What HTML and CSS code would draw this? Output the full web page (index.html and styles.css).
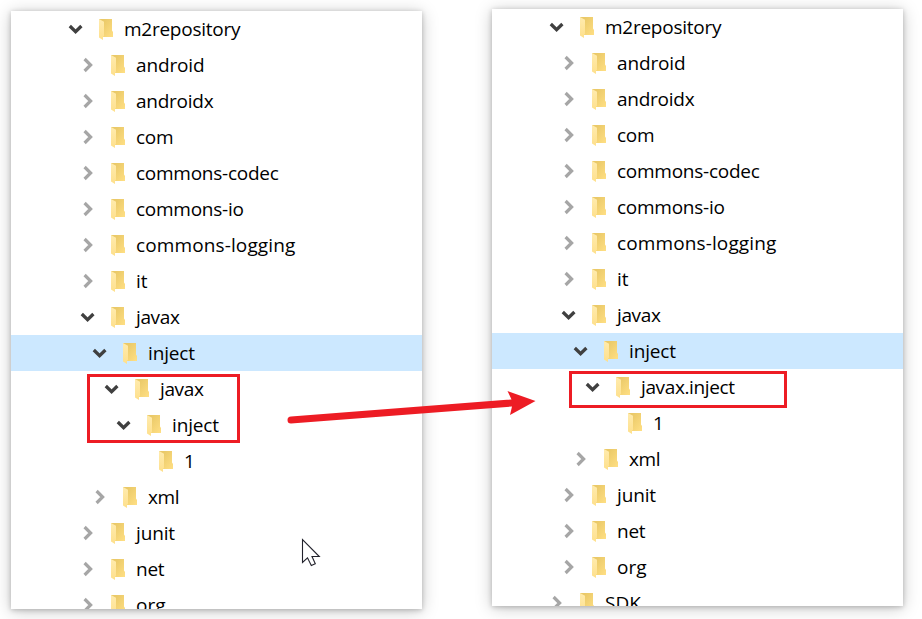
FILE: index.html
```html
<!DOCTYPE html>
<html lang="en">
<head>
<meta charset="utf-8">
<title>m2repository</title>
<link rel="stylesheet" href="styles.css">
</head>
<body>
<svg class="defs" aria-hidden="true">
  <defs>
    <linearGradient id="back" x1="0" y1="0" x2="1" y2="1"><stop offset="0.2" stop-color="#eac968"/><stop offset="1" stop-color="#ffdf84"/></linearGradient>
    <linearGradient id="flap" x1="0" y1="0" x2="0" y2="1"><stop offset="0" stop-color="#ffebae"/><stop offset="1" stop-color="#fee08c"/></linearGradient>
    <symbol id="folder" viewBox="0 0 14 21"><path fill="url(#back)" d="M0 0H13V11.600L14 13V18H0Z"/><path fill="url(#flap)" d="M0 0L5 2.800V16.800L4 18V21L0 18.400Z"/></symbol>
    <symbol id="open" viewBox="0 0 16 16"><path d="M1.800 5L7.600 10.600L13.400 5" fill="none" stroke="#404040" stroke-width="3.300"/></symbol>
    <symbol id="closed" viewBox="0 0 16 16"><path d="M4.600 2L10.600 8L4.600 14" fill="none" stroke="#a6a6a6" stroke-width="3.200"/></symbol>
  </defs>
</svg>
<main class="stage">
  <ul class="panel left">
    <li class="row l0"><svg class="chev"><use href="#open"/></svg><svg class="folder"><use href="#folder"/></svg><span class="tight">m2repository</span></li>
    <li class="row l1"><svg class="chev"><use href="#closed"/></svg><svg class="folder"><use href="#folder"/></svg><span class="snug">android</span></li>
    <li class="row l1"><svg class="chev"><use href="#closed"/></svg><svg class="folder"><use href="#folder"/></svg><span class="tight">androidx</span></li>
    <li class="row l1"><svg class="chev"><use href="#closed"/></svg><svg class="folder"><use href="#folder"/></svg><span class="tight">com</span></li>
    <li class="row l1"><svg class="chev"><use href="#closed"/></svg><svg class="folder"><use href="#folder"/></svg><span class="tight">commons-codec</span></li>
    <li class="row l1"><svg class="chev"><use href="#closed"/></svg><svg class="folder"><use href="#folder"/></svg><span class="tight">commons-io</span></li>
    <li class="row l1"><svg class="chev"><use href="#closed"/></svg><svg class="folder"><use href="#folder"/></svg><span class="loose">commons-logging</span></li>
    <li class="row l1"><svg class="chev"><use href="#closed"/></svg><svg class="folder"><use href="#folder"/></svg><span>it</span></li>
    <li class="row l1"><svg class="chev"><use href="#open"/></svg><svg class="folder"><use href="#folder"/></svg><span class="tighter">javax</span></li>
    <li class="row l2 selected"><svg class="chev"><use href="#open"/></svg><svg class="folder"><use href="#folder"/></svg><span class="snug">inject</span></li>
    <li class="row l3"><svg class="chev"><use href="#open"/></svg><svg class="folder"><use href="#folder"/></svg><span class="tighter">javax</span></li>
    <li class="row l4"><svg class="chev"><use href="#open"/></svg><svg class="folder"><use href="#folder"/></svg><span class="snug">inject</span></li>
    <li class="row l5"><svg class="chev"></svg><svg class="folder"><use href="#folder"/></svg><span>1</span></li>
    <li class="row l2"><svg class="chev"><use href="#closed"/></svg><svg class="folder"><use href="#folder"/></svg><span class="tighter">xml</span></li>
    <li class="row l1"><svg class="chev"><use href="#closed"/></svg><svg class="folder"><use href="#folder"/></svg><span class="snug">junit</span></li>
    <li class="row l1"><svg class="chev"><use href="#closed"/></svg><svg class="folder"><use href="#folder"/></svg><span class="tight">net</span></li>
    <li class="row l1"><svg class="chev"><use href="#closed"/></svg><svg class="folder"><use href="#folder"/></svg><span>org</span></li>
  </ul>
  <ul class="panel right">
    <li class="row l0"><svg class="chev"><use href="#open"/></svg><svg class="folder"><use href="#folder"/></svg><span class="tight">m2repository</span></li>
    <li class="row l1"><svg class="chev"><use href="#closed"/></svg><svg class="folder"><use href="#folder"/></svg><span class="snug">android</span></li>
    <li class="row l1"><svg class="chev"><use href="#closed"/></svg><svg class="folder"><use href="#folder"/></svg><span class="tight">androidx</span></li>
    <li class="row l1"><svg class="chev"><use href="#closed"/></svg><svg class="folder"><use href="#folder"/></svg><span class="tight">com</span></li>
    <li class="row l1"><svg class="chev"><use href="#closed"/></svg><svg class="folder"><use href="#folder"/></svg><span class="tight">commons-codec</span></li>
    <li class="row l1"><svg class="chev"><use href="#closed"/></svg><svg class="folder"><use href="#folder"/></svg><span class="tight">commons-io</span></li>
    <li class="row l1"><svg class="chev"><use href="#closed"/></svg><svg class="folder"><use href="#folder"/></svg><span class="loose">commons-logging</span></li>
    <li class="row l1"><svg class="chev"><use href="#closed"/></svg><svg class="folder"><use href="#folder"/></svg><span>it</span></li>
    <li class="row l1"><svg class="chev"><use href="#open"/></svg><svg class="folder"><use href="#folder"/></svg><span class="tighter">javax</span></li>
    <li class="row l2 selected"><svg class="chev"><use href="#open"/></svg><svg class="folder"><use href="#folder"/></svg><span class="snug">inject</span></li>
    <li class="row l3"><svg class="chev"><use href="#open"/></svg><svg class="folder"><use href="#folder"/></svg><span class="tighter">javax.inject</span></li>
    <li class="row l4"><svg class="chev"></svg><svg class="folder"><use href="#folder"/></svg><span>1</span></li>
    <li class="row l2"><svg class="chev"><use href="#closed"/></svg><svg class="folder"><use href="#folder"/></svg><span class="tighter">xml</span></li>
    <li class="row l1"><svg class="chev"><use href="#closed"/></svg><svg class="folder"><use href="#folder"/></svg><span class="snug">junit</span></li>
    <li class="row l1"><svg class="chev"><use href="#closed"/></svg><svg class="folder"><use href="#folder"/></svg><span class="tight">net</span></li>
    <li class="row l1"><svg class="chev"><use href="#closed"/></svg><svg class="folder"><use href="#folder"/></svg><span>org</span></li>
    <li class="row l0"><svg class="chev"><use href="#closed"/></svg><svg class="folder"><use href="#folder"/></svg><span>SDK</span></li>
  </ul>
  <svg class="notes" viewBox="0 0 922 619">
    <g fill="none" stroke="#ed1c24" stroke-width="3">
      <rect x="88.5" y="375.5" width="150" height="66"/>
      <rect x="570.5" y="372.5" width="215" height="34"/>
    </g>
    <path fill="#ed1c24" d="M291 416.500L511.500 399.500L507.500 391L535.500 401L510 415L512 406.500L291 423.500A3.500 3.500 0 0 1 291 416.500Z"/>
    <path fill="#fff" stroke="#22222c" stroke-width="1.100" d="M302.500 539.500V562.500L307.500 557.800L311.300 565.500L315.300 563.700L312 556.500H319.300Z"/>
  </svg>
</main>
</body>
</html>
```
FILE: styles.css
```css
body {
  margin: 0;
  background: #fff;
  font-family: "Open Sans", "Noto Sans", sans-serif;
  color: #000;
}

.defs {
  position: absolute;
  width: 0;
  height: 0;
}

.stage {
  position: relative;
  display: flex;
  align-items: flex-start;
  gap: 70px;
  box-sizing: border-box;
  width: 922px;
  height: 619px;
  padding: 9px 0 0 11px;
  overflow: hidden;
}

.panel {
  width: 411px;
  height: 597px;
  margin: 0;
  padding: 0;
  overflow: hidden;
  list-style: none;
  background: #fff;
  box-shadow: 0 1px 5px rgba(0, 0, 0, 0.22), 0 2px 16px rgba(0, 0, 0, 0.22);
}

.panel.left {
  height: 598px;
  margin-top: 2px;
}

.row {
  display: flex;
  align-items: center;
  height: 36px;
  padding-left: 57px;
  font-size: 19px;
  line-height: 36px;
  white-space: nowrap;
}

.l1 { padding-left: 69px; }
.l2 { padding-left: 81px; }
.l3 { padding-left: 93px; }
.l4 { padding-left: 105px; }
.l5 { padding-left: 117px; }

.selected { background: #cce8ff; }

.snug { letter-spacing: -0.15px; }
.tight { letter-spacing: -0.26px; }
.tighter { letter-spacing: -0.38px; }
.loose { letter-spacing: 0.12px; }

.chev {
  width: 16px;
  height: 16px;
  margin-right: 15px;
}

.folder {
  width: 14px;
  height: 21px;
  margin-right: 11px;
}

.notes {
  position: absolute;
  inset: 0;
  width: 922px;
  height: 619px;
  pointer-events: none;
}
```
